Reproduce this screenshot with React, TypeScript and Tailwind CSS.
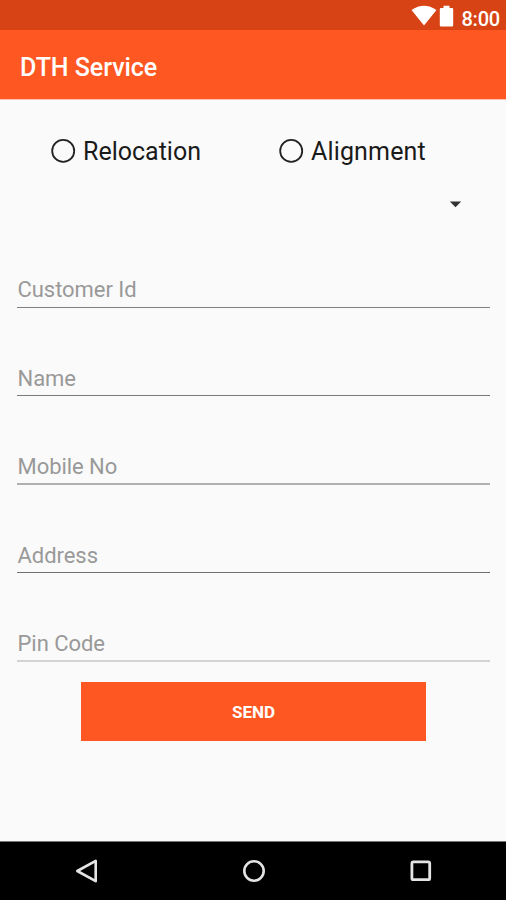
import React from "react";

const fields = [
  { label: "Customer Id", row: "h-[88px]", gap: "mb-1", line: "h-px bg-[#808080]" },
  { label: "Name", row: "h-[88px]", gap: "mb-[3px]", line: "h-px bg-[#7a7a7a]" },
  { label: "Mobile No", row: "h-[89px]", gap: "mb-[3px]", line: "h-0.5 bg-[#b0b0b0]" },
  { label: "Address", row: "h-[88px]", gap: "mb-[3px]", line: "h-px bg-[#707070]" },
  { label: "Pin Code", row: "h-[89px]", gap: "mb-[3px]", line: "h-0.5 bg-[#d3d3d3]" },
];

function Radio({ label, track }: { label: string; track: string }) {
  return (
    <div className="flex w-[228px] items-center">
      <svg className="block shrink-0" width="26" height="26" viewBox="0 0 26 26">
        <circle cx="13.2" cy="11.9" r="11" fill="none" stroke="#222" strokeWidth="1.8" />
      </svg>
      <span className={"ml-[7px] mt-px whitespace-nowrap text-[25px] leading-7 text-[#1a1a1a] " + track}>{label}</span>
    </div>
  );
}

export default function App() {
  return (
    <div className="flex h-[900px] w-[506px] flex-col overflow-hidden bg-[#fafafa] font-['Roboto',sans-serif]">
      <div className="flex h-[30px] shrink-0 items-start justify-end bg-[#d84315] pr-[6px] text-white">
        <svg className="mt-[5px] block" width="26" height="21" viewBox="0 0 26 21" fill="currentColor">
          <path d="M0.5 5 Q13 -3.5 25.5 5 L13 20.5 Z" />
        </svg>
        <svg className="ml-[2px] mt-[5px] block" width="15" height="22" viewBox="0 0 15 22" fill="currentColor">
          <path d="M4.5 0.8h6v2.2h2.5a1.2 1.2 0 0 1 1.2 1.2v16a1.2 1.2 0 0 1-1.2 1.2h-11a1.2 1.2 0 0 1-1.2-1.2v-16A1.2 1.2 0 0 1 2 3h2.5z" />
        </svg>
        <span className="ml-[7px] mt-[7px] text-[20px] font-medium leading-6 tracking-[-0.2px]">8:00</span>
      </div>
      <header className="flex h-[69px] shrink-0 items-center bg-[#ff5722] pl-5">
        <h1 className="mt-1.5 text-[25px] font-medium leading-8 tracking-[-0.05px] text-white">DTH Service</h1>
      </header>
      <main className="flex flex-1 flex-col border-t border-[#ffc4b0]">
        <div className="flex pl-[50px] pt-[37px]">
          <Radio label="Relocation" track="tracking-normal" />
          <Radio label="Alignment" track="tracking-[0.15px]" />
        </div>
        <div className="flex h-[54px] items-end justify-end pr-[44px]">
          <svg className="mb-[12px] block" width="13" height="7" viewBox="0 0 13 7">
            <path d="M0.8 0.5h11.4L6.5 6.2z" fill="#333" />
          </svg>
        </div>
        <form className="flex flex-col pl-[17px] pr-4">
          {fields.map((f) => (
            <label key={f.label} className={"flex flex-col justify-end " + f.row}>
              <span className={"pl-[0.5px] text-[22px] leading-[26px] tracking-[-0.05px] text-[#999] " + f.gap}>{f.label}</span>
              <span className={"block w-full " + f.line} />
            </label>
          ))}
          <button type="button" className="ml-16 mt-5 h-[59px] w-[345px] bg-[#ff5722] pt-0.5 text-[17px] font-bold text-white">
            SEND
          </button>
        </form>
      </main>
      <nav className="flex h-[59px] shrink-0 items-center border-t border-[#777] bg-black">
        <svg className="ml-[74px] block" width="26" height="26" viewBox="0 0 26 26" fill="none" stroke="#e4e4e4" strokeWidth="2.6" strokeLinejoin="round">
          <path d="M3.3 13L21.7 2.8V23.2Z" />
        </svg>
        <svg className="ml-[141px] block" width="26" height="26" viewBox="0 0 26 26" fill="none" stroke="#e4e4e4" strokeWidth="2.6">
          <circle cx="13" cy="13" r="9.7" />
        </svg>
        <svg className="ml-[141px] block" width="26" height="26" viewBox="0 0 26 26" fill="none" stroke="#e4e4e4" strokeWidth="2.8">
          <rect x="3.9" y="3.9" width="17.8" height="17.8" rx="1.5" />
        </svg>
      </nav>
    </div>
  );
}
